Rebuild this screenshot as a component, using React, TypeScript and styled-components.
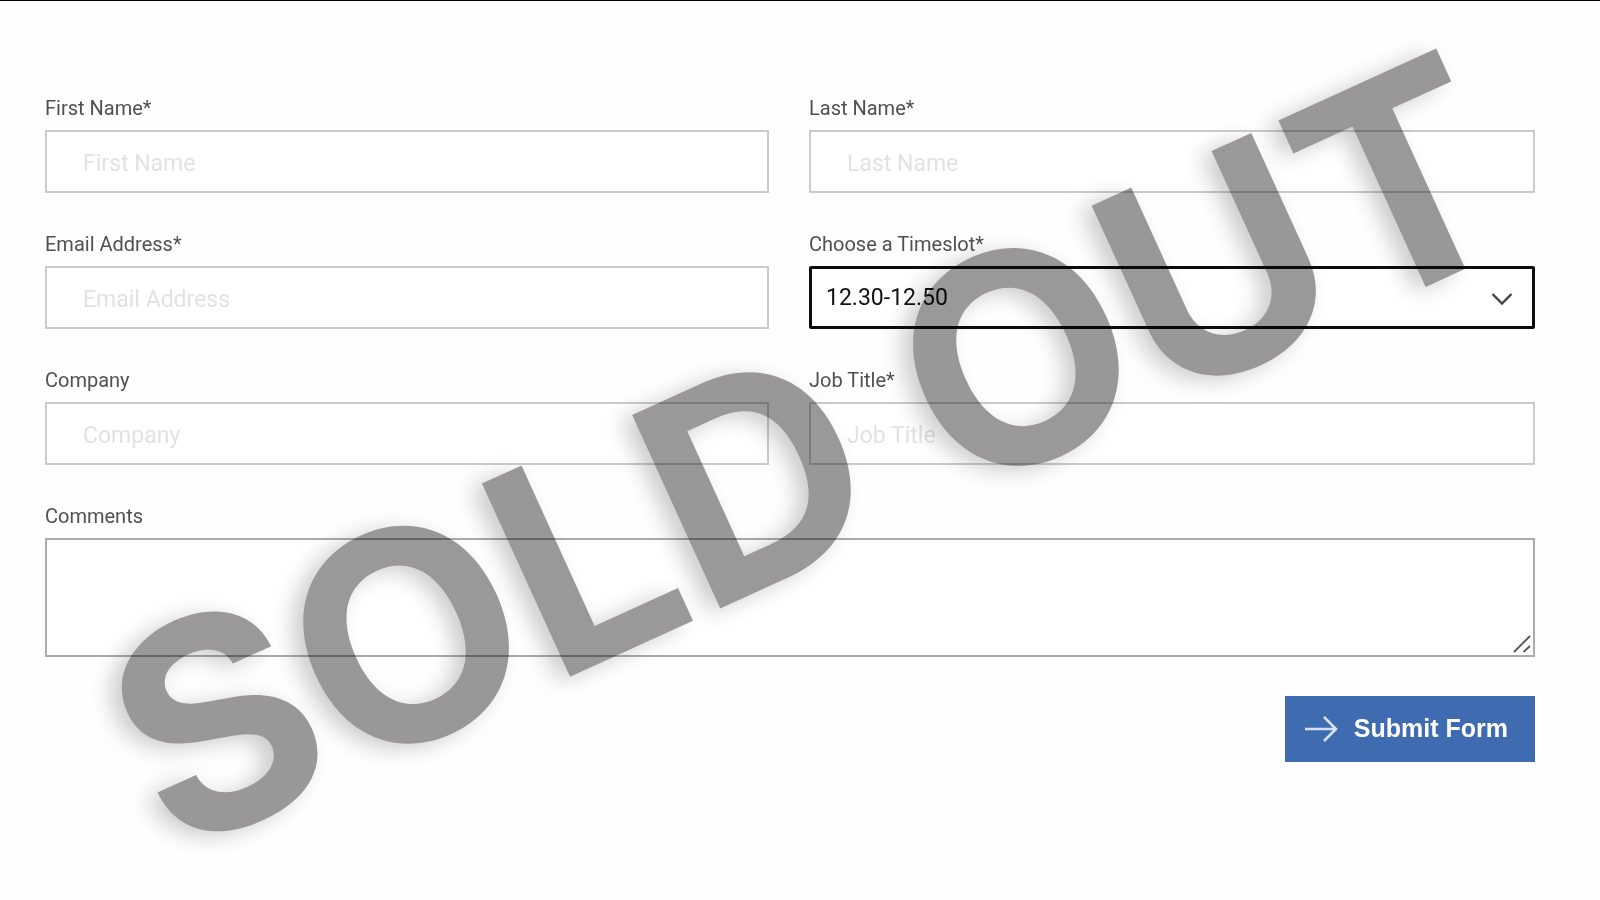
import React from "react";
import styled, { createGlobalStyle } from "styled-components";

const GlobalStyle = createGlobalStyle`
  *, *::before, *::after { box-sizing: border-box; }
  body {
    margin: 0;
    background: #fefefe;
    color: #505050;
    font-family: Roboto, "Liberation Sans", sans-serif;
  }
`;

const Page = styled.main`
  position: relative;
  min-height: 100vh;
  padding: 93px 65px 40px 45px;
  border-top: 1px solid #000;
  overflow-x: clip;
`;

const Form = styled.form`
  display: grid;
  grid-template-columns: 724fr 726fr;
  column-gap: 40px;
  row-gap: 37px;
`;

const Field = styled.div<{ $wide?: boolean }>`
  display: flex;
  flex-direction: column;
  gap: 8px;
  grid-column: ${(p) => (p.$wide ? "1 / -1" : "auto")};
`;

const Label = styled.label`
  font-size: 20px;
  line-height: 28px;
`;

const Control = styled.div`
  position: relative;
  display: flex;
`;

const TextInput = styled.input`
  width: 100%;
  height: 63px;
  padding: 4px 36px 0;
  border: 2px solid #cbcbcb;
  border-radius: 0;
  background: #fff;
  color: #111;
  font: inherit;
  font-size: 23px;
  &::placeholder { color: #e2e2e2; opacity: 1; }
`;

const Select = styled.select`
  appearance: none;
  width: 100%;
  height: 63px;
  padding: 0 56px 0 14px;
  border: 3px solid #0c0c0c;
  border-radius: 2px;
  background: #fff;
  color: #111;
  font: inherit;
  font-size: 23px;
`;

const TextArea = styled.textarea`
  display: block;
  width: 100%;
  height: 119px;
  padding: 16px 36px;
  border: 2px solid #ababab;
  border-radius: 0;
  background: #fff;
  color: #111;
  font: inherit;
  font-size: 23px;
  resize: none;
`;

const Chevron = styled.svg`
  position: absolute;
  right: 22px;
  top: 25px;
  pointer-events: none;
`;

const Grip = styled.svg`
  position: absolute;
  right: 3px;
  bottom: 3px;
  pointer-events: none;
`;

const Actions = styled.div`
  grid-column: 1 / -1;
  display: flex;
  justify-content: flex-end;
  padding-top: 2px;
`;

const SubmitButton = styled.button`
  display: flex;
  align-items: center;
  gap: 16px;
  height: 66px;
  padding: 0 27px 2px 20px;
  border: 0;
  background: #3f6bb1;
  color: #fff;
  font-family: "Liberation Sans", Arial, sans-serif;
  font-size: 25px;
  font-weight: 700;
  cursor: pointer;
`;

const Stamp = styled.div`
  position: absolute;
  left: calc(50% + 10px);
  top: 450px;
  transform: translate(-50%, -50%) rotate(-24.5deg);
  color: #9a9899;
  font-family: Inter, "Liberation Sans", sans-serif;
  font-size: 292px;
  font-weight: 700;
  line-height: 240px;
  white-space: nowrap;
  text-shadow: -12px 0 22px rgba(0, 0, 0, 0.2);
  mix-blend-mode: multiply;
  pointer-events: none;
`;

type TextFieldProps = { id: string; name: string; required?: boolean; type?: string };

function TextField({ id, name, required, type = "text" }: TextFieldProps) {
  return (
    <Field>
      <Label htmlFor={id}>{required ? `${name}*` : name}</Label>
      <TextInput id={id} name={id} type={type} placeholder={name} required={required} />
    </Field>
  );
}

export default function App() {
  return (
    <>
      <GlobalStyle />
      <Page>
        <Form onSubmit={(e) => e.preventDefault()}>
          <TextField id="first-name" name="First Name" required />
          <TextField id="last-name" name="Last Name" required />
          <TextField id="email" name="Email Address" type="email" required />
          <Field>
            <Label htmlFor="timeslot">Choose a Timeslot*</Label>
            <Control>
              <Select id="timeslot" name="timeslot" required>
                <option>12.30-12.50</option>
              </Select>
              <Chevron width="22" height="16" viewBox="0 0 22 16" fill="none" stroke="#444" strokeWidth="2.4" aria-hidden="true">
                <path d="M1.5 3 L11 12.5 L20.5 3" />
              </Chevron>
            </Control>
          </Field>
          <TextField id="company" name="Company" />
          <TextField id="job-title" name="Job Title" required />
          <Field $wide>
            <Label htmlFor="comments">Comments</Label>
            <Control>
              <TextArea id="comments" name="comments" />
              <Grip width="20" height="20" viewBox="0 0 20 20" fill="none" stroke="#555" strokeWidth="1.8" aria-hidden="true">
                <path d="M2 18 L18 2 M11.500 18 L18 12" />
              </Grip>
            </Control>
          </Field>
          <Actions>
            <SubmitButton type="submit">
              <svg width="33" height="28" viewBox="0 0 33 28" fill="none" stroke="#d5e2f6" strokeWidth="2.6" aria-hidden="true">
                <path d="M0 15 H31 M19 3 L31 15 L19 27" />
              </svg>
              Submit Form
            </SubmitButton>
          </Actions>
        </Form>
        <Stamp>SOLD OUT</Stamp>
      </Page>
    </>
  );
}
